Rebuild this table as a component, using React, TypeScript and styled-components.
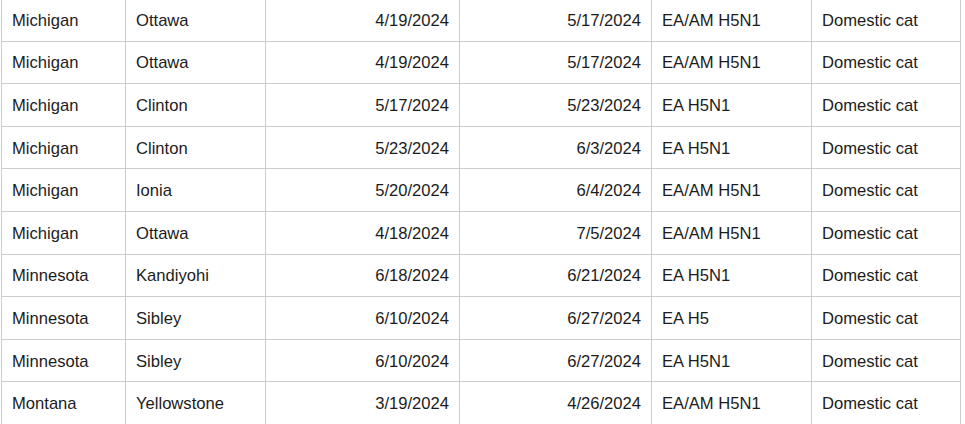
import React from "react";
import styled, { createGlobalStyle } from "styled-components";

const Global = createGlobalStyle`
  html, body { margin: 0; padding: 0; background: #ffffff; }
  body { font-family: "Liberation Sans", Arial, sans-serif; }
`;

const Page = styled.div`
  padding: 0 0 0 1px;
  margin-top: -2px;
`;

const Table = styled.div`
  display: grid;
  grid-template-columns: 124px 140px 194px 192px 160px 149px;
  grid-auto-rows: 42.6px;
  width: 960px;
  border-left: 1px solid #cccccc;
  border-top: 1px solid #cccccc;
  box-sizing: border-box;
`;

const Cell = styled.div<{ $align?: "left" | "right" }>`
  display: flex;
  align-items: center;
  justify-content: ${(p) => (p.$align === "right" ? "flex-end" : "flex-start")};
  padding: 2px 10px 0;
  border-right: 1px solid #cccccc;
  border-bottom: 1px solid #cccccc;
  box-sizing: border-box;
  font-size: 16.6px;
  color: #1c1c1c;
  white-space: nowrap;
  overflow: hidden;
`;

type Row = [string, string, string, string, string, string];

const rows: Row[] = [
  ["Michigan", "Ottawa", "4/19/2024", "5/17/2024", "EA/AM H5N1", "Domestic cat"],
  ["Michigan", "Ottawa", "4/19/2024", "5/17/2024", "EA/AM H5N1", "Domestic cat"],
  ["Michigan", "Clinton", "5/17/2024", "5/23/2024", "EA H5N1", "Domestic cat"],
  ["Michigan", "Clinton", "5/23/2024", "6/3/2024", "EA H5N1", "Domestic cat"],
  ["Michigan", "Ionia", "5/20/2024", "6/4/2024", "EA/AM H5N1", "Domestic cat"],
  ["Michigan", "Ottawa", "4/18/2024", "7/5/2024", "EA/AM H5N1", "Domestic cat"],
  ["Minnesota", "Kandiyohi", "6/18/2024", "6/21/2024", "EA H5N1", "Domestic cat"],
  ["Minnesota", "Sibley", "6/10/2024", "6/27/2024", "EA H5", "Domestic cat"],
  ["Minnesota", "Sibley", "6/10/2024", "6/27/2024", "EA H5N1", "Domestic cat"],
  ["Montana", "Yellowstone", "3/19/2024", "4/26/2024", "EA/AM H5N1", "Domestic cat"],
];

const align: ("left" | "right")[] = ["left", "left", "right", "right", "left", "left"];

export default function App() {
  return (
    <>
      <Global />
      <Page>
        <Table>
          {rows.map((r, i) =>
            r.map((c, j) => (
              <Cell key={`${i}-${j}`} $align={align[j]}>
                {c}
              </Cell>
            ))
          )}
        </Table>
      </Page>
    </>
  );
}
